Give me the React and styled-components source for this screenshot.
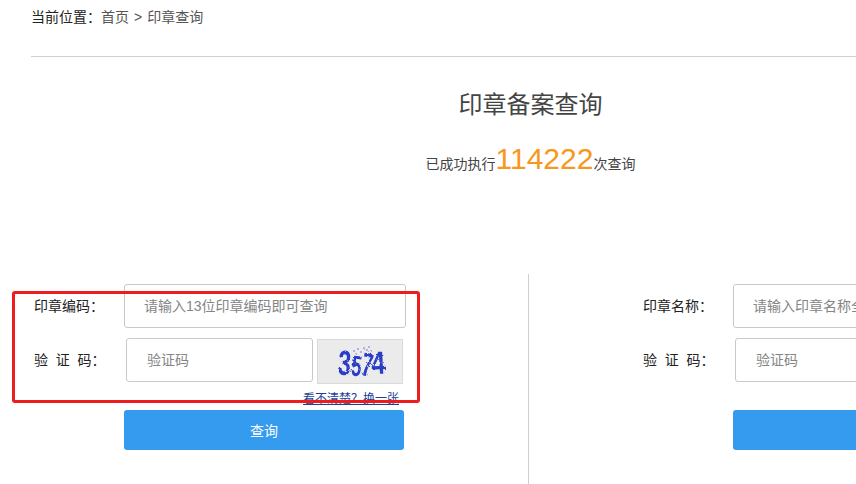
import React from "react";
import styled, { createGlobalStyle } from "styled-components";

const GlobalStyle = createGlobalStyle`
  html, body {
    margin: 0;
    padding: 0;
    background: #fff;
  }
  body {
    font-family: "Liberation Sans", "Noto Sans CJK SC", sans-serif;
  }
`;

const Page = styled.div`
  position: relative;
  width: 856px;
  height: 484px;
  overflow: hidden;
  background: #fff;
`;

const Breadcrumb = styled.div`
  height: 57px;
  margin-left: 31px;
  padding-top: 7px;
  box-sizing: border-box;
  border-bottom: 1px solid #cfcfcf;
  font-size: 14px;
  line-height: 20px;
  color: #222;
`;

const Crumb = styled.span`
  color: #555;
  word-spacing: 1.2px;
`;

const Title = styled.h1`
  margin: 31px 0 0;
  width: 1061px;
  text-align: center;
  font-size: 24px;
  font-weight: normal;
  line-height: 34px;
  color: #444;
`;

const Stats = styled.div`
  display: flex;
  align-items: baseline;
  justify-content: center;
  width: 1061px;
  height: 40px;
  margin-top: 17px;
  font-size: 14px;
  color: #444;
`;

const Count = styled.span`
  font-size: 30px;
  line-height: 40px;
  color: #f7981d;
`;

const Columns = styled.div`
  display: grid;
  grid-template-columns: 528px 328px;
  margin-top: 95px;
  height: 210px;
`;

const Form = styled.form`
  box-sizing: border-box;
  width: ${(p) => (p.$right ? "328px" : "528px")};
  padding: 10px 0 0 ${(p) => (p.$right ? "114px" : "34px")};
  border-left: ${(p) => (p.$right ? "1px solid #cfcfcf" : "none")};
  overflow: hidden;
`;

const Row = styled.div`
  display: flex;
  align-items: flex-start;
  height: 44px;
  margin-top: ${(p) => (p.$second ? "10px" : "0")};
`;

const Label = styled.label`
  flex: none;
  width: ${(p) => (p.$second ? "92px" : "90px")};
  font-size: 14px;
  line-height: 44px;
  color: #222;
  white-space: pre;
`;

const Input = styled.input`
  flex: none;
  box-sizing: border-box;
  width: ${(p) => (p.$short ? "187px" : "282px")};
  height: 44px;
  padding: 0 ${(p) => (p.$tight ? "19px" : "20px")};
  border: 1px solid #c9c9c9;
  border-radius: 3px;
  outline: none;
  background: #fff;
  font-family: inherit;
  font-size: 14px;
  color: #333;

  &::placeholder {
    color: #858585;
    opacity: 1;
  }
`;

const Captcha = styled.svg`
  flex: none;
  display: block;
  width: 86px;
  height: 45px;
  margin: 1px 0 0 4px;
`;

const HintRow = styled.div`
  display: flex;
  justify-content: flex-end;
  width: 365px;
  height: 16px;
  margin-top: 9px;
  font-size: 12px;
  line-height: 16px;
`;

const HintLink = styled.a`
  color: #1d3f94;
  text-decoration: underline;
`;

const Submit = styled.button`
  display: block;
  width: 280px;
  height: 40px;
  margin: 3px 0 0 90px;
  border: none;
  border-radius: 3px;
  background: #349bef;
  color: #fff;
  font-family: inherit;
  font-size: 14px;
`;

const Highlight = styled.div`
  position: absolute;
  left: 12px;
  top: 291px;
  width: 408px;
  height: 112px;
  box-sizing: border-box;
  border: 3px solid #ee1c1c;
  border-radius: 3px;
  pointer-events: none;
`;

const captchaDigits = [
  { ch: "3", x: 21, y: 36, r: 4, size: 35, w: 13 },
  { ch: "5", x: 35, y: 37, r: 7, size: 29, w: 10 },
  { ch: "7", x: 45, y: 37, r: 9, size: 33, w: 11 },
  { ch: "4", x: 54, y: 35, r: -3, size: 32, w: 14 },
];

const captchaSpecks = [
  [37, 12], [41, 10], [44, 13], [47, 9], [50, 11], [52, 8], [54, 12], [39, 15], [49, 15],
];

const CaptchaImage = () => (
  <Captcha viewBox="0 0 86 45" aria-label="验证码">
    <defs>
      <filter id="soft" x="-20%" y="-20%" width="140%" height="140%">
        <feTurbulence type="fractalNoise" baseFrequency="0.4" numOctaves="2" seed="7" />
        <feDisplacementMap in="SourceGraphic" scale="3" />
        <feGaussianBlur stdDeviation="0.7" />
      </filter>
    </defs>
    <rect x="0.5" y="0.5" width="85" height="44" fill="#ebebeb" stroke="#dadada" />
    <g filter="url(#soft)" fill="#2c3cc8" fontFamily='"Liberation Sans", sans-serif'>
      {captchaDigits.map((d) => (
        <text
          key={d.x}
          x={d.x}
          y={d.y}
          fontSize={d.size}
          fontWeight="bold"
          textLength={d.w}
          lengthAdjust="spacingAndGlyphs"
          transform={`rotate(${d.r} ${d.x + 6} ${d.y - 12})`}
        >
          {d.ch}
        </text>
      ))}
      {captchaSpecks.map(([x, y]) => (
        <circle key={`${x}-${y}`} cx={x} cy={y} r="0.8" opacity="0.7" />
      ))}
    </g>
  </Captcha>
);

const QueryForm = ({ right, label, placeholder, hint }) => (
  <Form $right={right} onSubmit={(e) => e.preventDefault()}>
    <Row>
      <Label>{label}</Label>
      <Input $tight placeholder={placeholder} />
    </Row>
    <Row $second>
      <Label $second>{"验\u00a0\u00a0证\u00a0\u00a0码："}</Label>
      <Input $short={!right} placeholder="验证码" />
      {!right && <CaptchaImage />}
    </Row>
    <HintRow>{hint && <HintLink href="#">看不清楚？换一张</HintLink>}</HintRow>
    <Submit type="submit">查询</Submit>
  </Form>
);

export default function App() {
  return (
    <Page>
      <GlobalStyle />
      <Breadcrumb>
        当前位置：<Crumb>首页 &gt; 印章查询</Crumb>
      </Breadcrumb>
      <Title>印章备案查询</Title>
      <Stats>
        已成功执行<Count>114222</Count>次查询
      </Stats>
      <Columns>
        <QueryForm label="印章编码：" placeholder="请输入13位印章编码即可查询" hint />
        <QueryForm right label="印章名称：" placeholder="请输入印章名称全称即可查询" />
      </Columns>
      <Highlight />
    </Page>
  );
}
